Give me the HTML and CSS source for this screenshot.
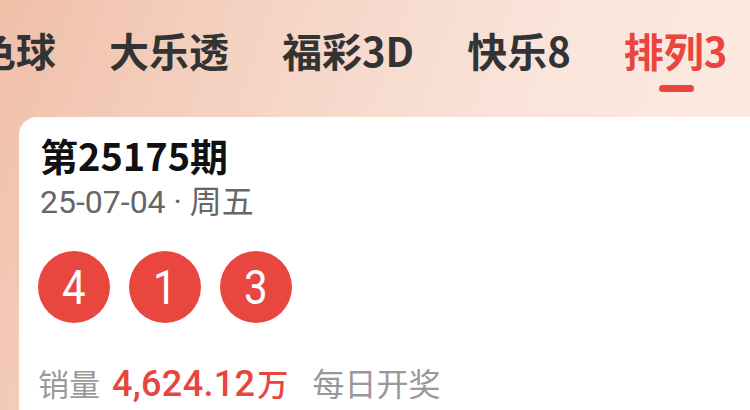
FILE: index.html
```html
<!DOCTYPE html>
<html lang="zh-CN">
<head>
<meta charset="utf-8">
<link rel="stylesheet" href="styles.css">
</head>
<body>
<div class="page">
  <nav class="tabs">
    <div class="tab">双色球</div>
    <div class="tab">大乐透</div>
    <div class="tab">福彩3D</div>
    <div class="tab">快乐8</div>
    <div class="tab active">排列3</div>
  </nav>
  <section class="card">
    <h1 class="issue">第25175期</h1>
    <div class="date">25-07-04 · 周五</div>
    <div class="balls">
      <span class="ball"><span class="num">4</span></span>
      <span class="ball"><span class="num">1</span></span>
      <span class="ball"><span class="num">3</span></span>
    </div>
    <div class="sales">
      <span class="label">销量</span><span class="amount">4,624.12<span class="unit">万</span></span><span class="freq">每日开奖</span>
    </div>
  </section>
</div>
</body>
</html>
```
FILE: styles.css
```css
html, body {
  margin: 0;
  padding: 0;
}
body {
  width: 750px;
  height: 410px;
  overflow: hidden;
  font-family: Roboto, "Noto Sans CJK SC", sans-serif;
  background: linear-gradient(110deg, #f0bfa8 0%, #f6d6c8 35%, #fae5dc 65%, #fcebe3 100%);
}
.page {
  display: flex;
  flex-direction: column;
}
.tabs {
  display: flex;
  gap: 53px;
  margin-left: -64px;
  padding-top: 25px;
  height: 117px;
  box-sizing: border-box;
}
.tab {
  position: relative;
  font-family: "Noto Sans CJK SC", sans-serif;
  font-weight: 700;
  font-size: 40px;
  line-height: 50px;
  height: 50px;
  color: #333333;
  white-space: nowrap;
}
.tab.active {
  color: #e8453e;
}
.tab.active::after {
  content: "";
  position: absolute;
  left: 50%;
  top: 60px;
  width: 35px;
  height: 7px;
  margin-left: -17px;
  border-radius: 4px;
  background: #e8453e;
}
.card {
  margin-left: 19px;
  background: #ffffff;
  border-radius: 18px 0 0 0;
  padding: 14px 0 0 21px;
  height: 279px;
}
.issue {
  margin: 0;
  font-family: "Noto Sans CJK SC", sans-serif;
  font-weight: 700;
  font-size: 38px;
  line-height: 48px;
  color: #111111;
}
.date {
  margin-top: 5px;
  font-size: 32px;
  line-height: 36px;
  color: #666666;
}
.balls {
  display: flex;
  gap: 19px;
  margin-top: 31px;
  margin-left: -2px;
}
.ball {
  width: 72px;
  height: 72px;
  border-radius: 50%;
  background: #e8463f;
  color: #ffffff;
  display: flex;
  align-items: center;
  justify-content: center;
}
.num {
  display: inline-block;
  font-size: 49px;
  line-height: 1;
  transform: scaleX(0.86);
}
.sales {
  margin-top: 39px;
  font-size: 31px;
  line-height: 40px;
  display: flex;
  align-items: baseline;
}
.label {
  color: #999999;
  font-family: "Noto Sans CJK SC", sans-serif;
  margin-left: -2px;
}
.amount {
  color: #e8453e;
  font-size: 36px;
  font-weight: 500;
  margin-left: 12px;
  letter-spacing: 0.3px;
}
.unit {
  font-family: "Noto Sans CJK SC", sans-serif;
  font-size: 31px;
  font-weight: 500;
  margin-left: 2px;
}
.freq {
  color: #999999;
  font-family: "Noto Sans CJK SC", sans-serif;
  font-size: 32px;
  margin-left: 24px;
}
```
